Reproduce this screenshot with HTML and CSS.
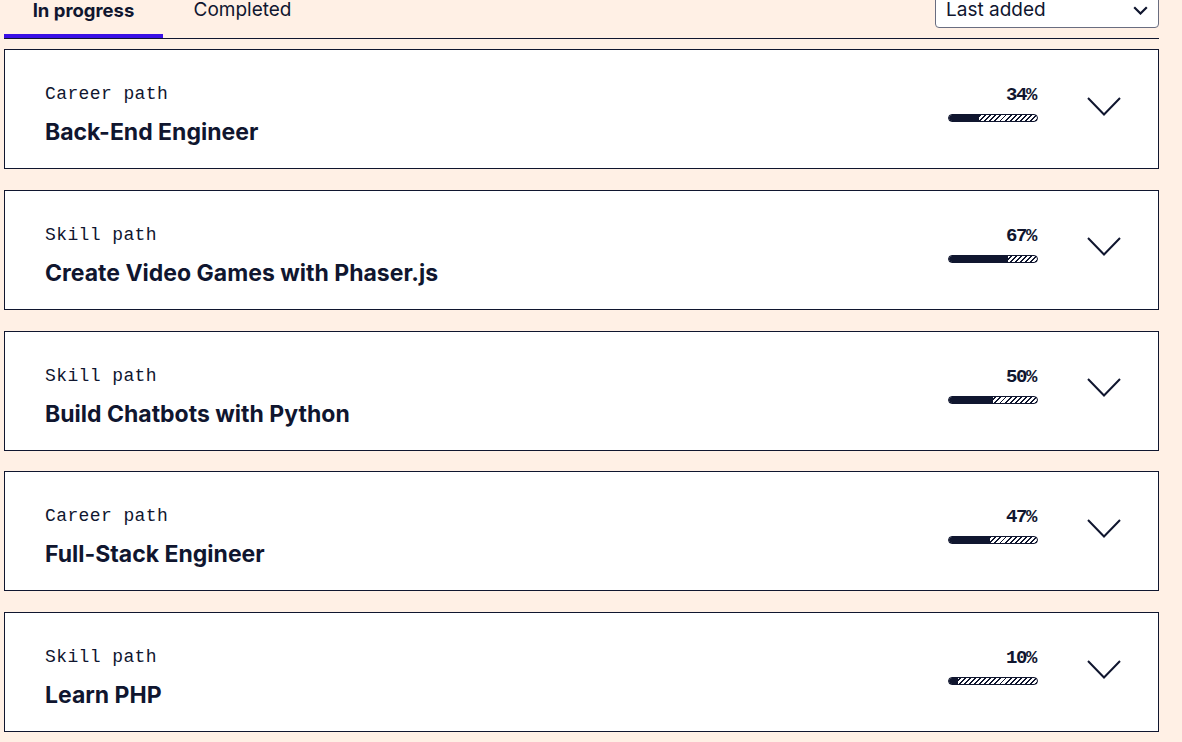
FILE: index.html
```html
<!DOCTYPE html>
<html lang="en">
<head>
<meta charset="utf-8">
<title>My learning</title>
<link rel="stylesheet" href="styles.css">
</head>
<body>
<div class="page">
  <div class="header">
    <div class="tabs">
      <button class="tab active">In progress</button>
      <button class="tab">Completed</button>
    </div>
    <div class="select">
      <span>Last added</span>
      <svg class="select-chev" width="15" height="9" viewBox="0 0 15 9"><path d="M1.2 1.2 L7.5 7.5 L13.8 1.2" fill="none" stroke="#10162f" stroke-width="2.2"/></svg>
    </div>
  </div>
  <div class="list">
    <div class="card">
      <div class="info"><div class="kind">Career path</div><div class="title">Back-End Engineer</div></div>
      <div class="progress"><div class="pct">34%</div><div class="bar"><div class="fill" style="width:34%"></div></div></div>
      <svg class="chev" width="34" height="19" viewBox="0 0 34 19"><path d="M1 1 L17 17.5 L33 1" fill="none" stroke="#10162f" stroke-width="2"/></svg>
    </div>
    <div class="card">
      <div class="info"><div class="kind">Skill path</div><div class="title">Create Video Games with Phaser.js</div></div>
      <div class="progress"><div class="pct">67%</div><div class="bar"><div class="fill" style="width:67%"></div></div></div>
      <svg class="chev" width="34" height="19" viewBox="0 0 34 19"><path d="M1 1 L17 17.5 L33 1" fill="none" stroke="#10162f" stroke-width="2"/></svg>
    </div>
    <div class="card">
      <div class="info"><div class="kind">Skill path</div><div class="title">Build Chatbots with Python</div></div>
      <div class="progress"><div class="pct">50%</div><div class="bar"><div class="fill" style="width:50%"></div></div></div>
      <svg class="chev" width="34" height="19" viewBox="0 0 34 19"><path d="M1 1 L17 17.5 L33 1" fill="none" stroke="#10162f" stroke-width="2"/></svg>
    </div>
    <div class="card">
      <div class="info"><div class="kind">Career path</div><div class="title">Full-Stack Engineer</div></div>
      <div class="progress"><div class="pct">47%</div><div class="bar"><div class="fill" style="width:47%"></div></div></div>
      <svg class="chev" width="34" height="19" viewBox="0 0 34 19"><path d="M1 1 L17 17.5 L33 1" fill="none" stroke="#10162f" stroke-width="2"/></svg>
    </div>
    <div class="card">
      <div class="info"><div class="kind">Skill path</div><div class="title">Learn PHP</div></div>
      <div class="progress"><div class="pct">10%</div><div class="bar"><div class="fill" style="width:10%"></div></div></div>
      <svg class="chev" width="34" height="19" viewBox="0 0 34 19"><path d="M1 1 L17 17.5 L33 1" fill="none" stroke="#10162f" stroke-width="2"/></svg>
    </div>
  </div>
</div>
</body>
</html>
```
FILE: styles.css
```css
html, body {
  margin: 0;
  padding: 0;
  background: #fff0e5;
  color: #10162f;
  font-family: Inter, "Noto Sans", sans-serif;
}
.page {
  width: 1155px;
  padding-left: 4px;
  margin-top: -12px;
}
.header {
  display: flex;
  justify-content: space-between;
  align-items: flex-end;
  border-bottom: 1px solid #10162f;
}
.tabs {
  display: flex;
}
.tab {
  width: 159px;
  background: none;
  border: none;
  border-bottom: 4px solid transparent;
  padding: 8px 0 10px;
  font-family: Inter, "Noto Sans", sans-serif;
  font-size: 19px;
  line-height: 28px;
  color: #10162f;
  font-weight: 400;
}
.tab.active {
  font-weight: 700;
  font-size: 18.5px;
  border-bottom-color: #3a10e5;
}
.select {
  width: 224px;
  box-sizing: border-box;
  height: 40px;
  margin-bottom: 10px;
  background: #fff;
  border: 1px solid #696d80;
  border-radius: 4px;
  display: flex;
  align-items: center;
  justify-content: space-between;
  padding: 2px 10px 0 10px;
  font-size: 19px;
}
.select-chev {
  display: block;
  margin-top: 3px;
}
.list {
  padding-top: 10px;
  display: flex;
  flex-direction: column;
  gap: 20.75px;
}
.card {
  height: 120px;
  box-sizing: border-box;
  background: #fff;
  border: 1px solid #10162f;
  display: flex;
  align-items: center;
  padding: 0 37px 0 40px;
}
.info {
  flex: 1;
  align-self: flex-start;
  padding-top: 34px;
}
.kind {
  font-family: "Liberation Mono", monospace;
  font-size: 18px;
  letter-spacing: 0.4px;
  line-height: 20px;
}
.title {
  margin-top: 14px;
  font-size: 23px;
  font-weight: 700;
  line-height: 28px;
}
.progress {
  width: 90px;
  margin-right: 49px;
  align-self: flex-start;
  padding-top: 34px;
}
.pct {
  text-align: right;
  font-family: "Liberation Mono", monospace;
  font-weight: 700;
  font-size: 19px;
  letter-spacing: -1.4px;
  line-height: 20px;
  padding-top: 1px;
  padding-right: 2px;
  margin-bottom: -1px;
}
.bar {
  margin-top: 10px;
  height: 8px;
  box-sizing: border-box;
  border: 1px solid #10162f;
  border-radius: 4px;
  overflow: hidden;
  background: repeating-linear-gradient(135deg, #10162f 0 1.4px, #fff 1.4px 3.6px);
}
.fill {
  height: 100%;
  background: #10162f;
}
.chev {
  display: block;
  margin-top: -6px;
}
```
